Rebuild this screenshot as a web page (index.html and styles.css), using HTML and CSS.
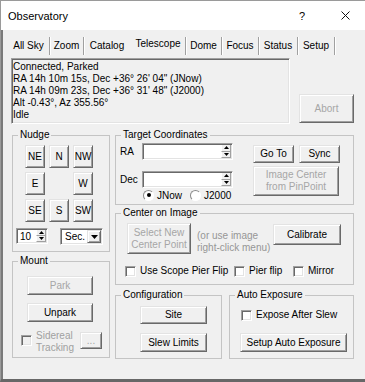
FILE: index.html
```html
<!DOCTYPE html>
<html lang="en">
<head>
  <meta charset="UTF-8" />
  <meta name="viewport" content="width=device-width, initial-scale=1.0" />
  <title>Observatory</title>
  <link rel="stylesheet" href="styles.css">
</head>
<body>
  <div class="window">
    <div class="titlebar">
      <span class="title">Observatory</span>
      <span class="help">?</span>
      <span class="close"><svg width="9" height="9" viewBox="0 0 9 9"><path d="M0.5 0.5L8.5 8.5M8.5 0.5L0.5 8.5" stroke="#111" stroke-width="1"/></svg></span>
    </div>

    <div class="client">
      <div class="tabs">
        <span class="tab w-allsky">All Sky</span>
        <span class="tab w-zoom">Zoom</span>
        <span class="tab w-catalog nosep">Catalog</span>
        <span class="tab w-telescope active">Telescope</span>
        <span class="tab w-dome">Dome</span>
        <span class="tab w-focus">Focus</span>
        <span class="tab w-status">Status</span>
        <span class="tab w-setup">Setup</span>
      </div>

      <div class="status-row">
        <div class="status sunken">
          <div>Connected, Parked</div>
          <div>RA 14h 10m 15s, Dec +36° 26' 04&quot; (JNow)</div>
          <div>RA 14h 09m 23s, Dec +36° 31' 48&quot; (J2000)</div>
          <div>Alt -0.43°, Az 355.56°</div>
          <div>Idle</div>
        </div>
        <button class="btn abort" disabled>Abort</button>
      </div>

      <div class="main">
        <div class="col col-left">
          <fieldset class="group nudge">
            <legend>Nudge</legend>
            <div class="pad-grid">
              <button class="btn">NE</button>
              <button class="btn">N</button>
              <button class="btn">NW</button>
              <button class="btn">E</button>
              <span></span>
              <button class="btn">W</button>
              <button class="btn">SE</button>
              <button class="btn">S</button>
              <button class="btn">SW</button>
            </div>
            <div class="spin-row">
              <div class="spin sunken">
                <span class="spin-val">10</span>
                <span class="updown">
                  <span><svg width="5" height="3" viewBox="0 0 5 3"><path d="M2.5 0L5 3H0z" fill="#000"/></svg></span>
                  <span><svg width="5" height="3" viewBox="0 0 5 3"><path d="M0 0H5L2.5 3z" fill="#000"/></svg></span>
                </span>
              </div>
              <div class="combo sunken">
                <span class="combo-val">Sec.</span>
                <span class="combo-btn"><svg width="7" height="4" viewBox="0 0 7 4"><path d="M0 0H7L3.5 4z" fill="#000"/></svg></span>
              </div>
            </div>
          </fieldset>

          <fieldset class="group mount">
            <legend>Mount</legend>
            <button class="btn park" disabled>Park</button>
            <button class="btn unpark">Unpark</button>
            <div class="sidereal">
              <span class="check off"></span>
              <span class="sidereal-label">Sidereal<br>Tracking</span>
              <button class="btn dots" disabled>...</button>
            </div>
          </fieldset>
        </div>

        <div class="col col-right">
          <fieldset class="group target">
            <legend>Target Coordinates</legend>
            <div class="target-body">
              <div class="coords">
                <div class="coord-row ra">
                  <span class="coord-label">RA</span>
                  <div class="field sunken">
                    <span class="updown">
                      <span><svg width="5" height="3" viewBox="0 0 5 3"><path d="M2.5 0L5 3H0z" fill="#000"/></svg></span>
                      <span><svg width="5" height="3" viewBox="0 0 5 3"><path d="M0 0H5L2.5 3z" fill="#000"/></svg></span>
                    </span>
                  </div>
                </div>
                <div class="coord-row dec">
                  <span class="coord-label">Dec</span>
                  <div class="field sunken">
                    <span class="updown">
                      <span><svg width="5" height="3" viewBox="0 0 5 3"><path d="M2.5 0L5 3H0z" fill="#000"/></svg></span>
                      <span><svg width="5" height="3" viewBox="0 0 5 3"><path d="M0 0H5L2.5 3z" fill="#000"/></svg></span>
                    </span>
                  </div>
                </div>
                <div class="radios">
                  <span class="radio on"><i></i></span><span class="radio-label">JNow</span>
                  <span class="radio"><i></i></span><span class="radio-label">J2000</span>
                </div>
              </div>
              <div class="target-btns">
                <div class="btn-pair">
                  <button class="btn goto">Go To</button>
                  <button class="btn sync">Sync</button>
                </div>
                <button class="btn pinpoint" disabled>Image Center<br>from PinPoint</button>
              </div>
            </div>
          </fieldset>

          <fieldset class="group center">
            <legend>Center on Image</legend>
            <div class="center-top">
              <button class="btn select-new" disabled>Select New<br>Center Point</button>
              <span class="note">(or use image<br>right-click menu)</span>
              <button class="btn calibrate">Calibrate</button>
            </div>
            <div class="options">
              <span class="opt opt-1"><span class="check"></span><span class="opt-label">Use Scope Pier Flip</span></span>
              <span class="opt opt-2"><span class="check"></span><span class="opt-label">Pier flip</span></span>
              <span class="opt"><span class="check"></span><span class="opt-label">Mirror</span></span>
            </div>
          </fieldset>

          <div class="bottom-row">
            <fieldset class="group config">
              <legend>Configuration</legend>
              <button class="btn site">Site</button>
              <button class="btn slew">Slew Limits</button>
            </fieldset>
            <fieldset class="group autoexp">
              <legend>Auto Exposure</legend>
              <span class="opt expose"><span class="check"></span><span class="opt-label">Expose After Slew</span></span>
              <button class="btn setup-auto">Setup Auto Exposure</button>
            </fieldset>
          </div>
        </div>
      </div>
    </div>
  </div>
</body>
</html>
```

FILE: styles.css
```css
* { box-sizing: border-box; }
html, body { margin: 0; padding: 0; }
body {
  width: 365px;
  height: 382px;
  overflow: hidden;
  font-family: "Liberation Sans", Arial, sans-serif;
  font-size: 10px;
  color: #000;
  background: #f0f0f0;
}

.window {
  height: 382px;
  display: flex;
  flex-direction: column;
  border-top: 1px solid #9a9a9a;
  border-left: 1px solid #9a9a9a;
  border-bottom: 3px solid #676767;
}

/* title bar */
.titlebar {
  height: 29px;
  flex: none;
  display: flex;
  align-items: center;
  padding-left: 7px;
  background: #fff;
  font-size: 11px;
}
.help { margin-left: auto; font-size: 11px; }
.close { display: flex; margin: 0 15px 0 36px; }

.client {
  flex: 1;
  padding: 0 11px;
  background: #f0f0f0;
  box-shadow: inset 2px 0 0 #7a7a7a;
}

/* tab strip (flat buttons) */
.tabs { display: flex; height: 18px; margin: 7px 0 0 -4px; }
.tab {
  height: 18px;
  line-height: 18px;
  text-align: center;
  border-right: 1px solid #a0a0a0;
  box-shadow: 1px 0 0 #fff;
}
.tab.nosep { border-right-color: transparent; box-shadow: none; }
.tab.active { line-height: 14px; }
.w-allsky { width: 42px; }
.w-zoom { width: 34px; }
.w-catalog { width: 47px; }
.w-telescope { width: 55px; }
.w-dome { width: 36px; }
.w-focus { width: 37px; }
.w-status { width: 39px; }
.w-setup { width: 37px; }

/* 3d borders */
.sunken {
  border: 1px solid;
  border-color: #a0a0a0 #fff #fff #a0a0a0;
  box-shadow: inset 1px 1px 0 #696969, inset -1px -1px 0 #e3e3e3;
}
.btn {
  font: inherit;
  color: #000;
  margin: 0;
  padding: 0;
  background: #f0f0f0;
  border: 1px solid;
  border-color: #e3e3e3 #696969 #696969 #e3e3e3;
  box-shadow: inset 1px 1px 0 #fff, inset -1px -1px 0 #a0a0a0;
  line-height: 12px;
}
.btn:disabled { color: #a6a6a6; }

/* status */
.status-row { display: flex; align-items: flex-end; margin-top: 3px; }
.status {
  width: 279px;
  height: 66px;
  margin-left: -1px;
  padding: 2px 0 0 1px;
  line-height: 12px;
}
.abort { width: 55px; height: 29px; margin: 0 0 1px 9px; }

/* group boxes */
.main { display: flex; gap: 5px; margin-top: 5px; }
.col { display: flex; flex-direction: column; }
.col-left { width: 98px; }
.col-right { width: 239px; }
.group {
  margin: 0;
  padding: 0;
  min-width: 0;
  border: 1px solid #c4c4c4;
}
.group legend {
  margin-left: 5px;
  padding: 0 2px;
  line-height: 12px;
}

/* nudge */
.nudge { height: 123px; }
.pad-grid {
  display: grid;
  grid-template-columns: repeat(3, 20px);
  grid-auto-rows: 23px;
  gap: 4px;
  margin: 4px 0 0 12px;
}
.spin-row { display: flex; margin: 6px 0 0 3px; }
.spin { display: flex; width: 32px; height: 16px; background: #fff; padding: 1px; }
.spin-val { flex: 1; line-height: 13px; padding-left: 2px; }
.updown { width: 10px; display: flex; flex-direction: column; }
.updown span {
  flex: 1;
  display: flex;
  align-items: center;
  justify-content: center;
  background: #f0f0f0;
  border-right: 1px solid #a0a0a0;
  border-bottom: 1px solid #a0a0a0;
  border-left: 1px solid #fff;
}
.combo { display: flex; width: 43px; height: 17px; margin-left: 12px; background: #fff; padding: 1px; }
.combo-val { flex: 1; line-height: 14px; padding-left: 3px; }
.combo-btn {
  width: 14px;
  display: flex;
  align-items: center;
  justify-content: center;
  background: #f0f0f0;
  border: 1px solid;
  border-color: #e3e3e3 #696969 #696969 #e3e3e3;
  box-shadow: inset 1px 1px 0 #fff, inset -1px -1px 0 #a0a0a0;
}

/* mount */
.mount { height: 103px; margin-top: 3px; }
.park, .unpark { display: block; width: 66px; height: 19px; margin-left: 14px; }
.park { margin-top: 9px; }
.unpark { margin-top: 8px; }
.sidereal { display: flex; margin: 8px 0 0 8px; }
.sidereal .check { margin-top: 5px; }
.sidereal-label { width: 40px; margin-left: 4px; line-height: 12px; color: #a0a0a0; }
.dots { width: 22px; height: 17px; margin: 2px 0 0 4px; }

/* checkboxes + radios */
.check {
  flex: none;
  width: 11px;
  height: 11px;
  background: #fff;
  border: 1px solid;
  border-color: #a0a0a0 #fff #fff #a0a0a0;
  box-shadow: inset 1px 1px 0 #696969, inset -1px -1px 0 #e3e3e3;
}
.check.off { background: #f0f0f0; }
.opt { display: flex; align-items: center; line-height: 12px; }
.opt-label { margin-left: 4px; white-space: nowrap; }
.radio {
  flex: none;
  width: 11px;
  height: 11px;
  border-radius: 50%;
  background: #fff;
  border: 1px solid;
  border-color: #8a8a8a #fff #fff #8a8a8a;
  display: flex;
  align-items: center;
  justify-content: center;
}
.radio i { width: 4px; height: 4px; border-radius: 50%; }
.radio.on i { background: #000; }
.radio-label { margin: 0 8px 0 3px; }

/* target coordinates */
.target { height: 76px; }
.target-body { display: flex; }
.coords { width: 117px; }
.coord-row { display: flex; align-items: center; }
.coord-row.ra { margin-top: 2px; }
.coord-row.dec { margin-top: 11px; }
.coord-label { width: 26px; padding-left: 4px; }
.field { width: 91px; height: 17px; background: #fff; display: flex; justify-content: flex-end; padding: 1px; }
.radios { display: flex; align-items: center; margin: 1px 0 0 27px; height: 12px; }
.target-btns { margin-left: 20px; }
.btn-pair { display: flex; gap: 5px; margin-top: 4px; }
.goto, .sync { width: 41px; height: 18px; }
.pinpoint { display: block; width: 86px; height: 30px; margin-top: 3px; }

/* center on image */
.center { height: 78px; margin-top: 2px; }
.center-top { display: flex; align-items: flex-start; }
.select-new { width: 64px; height: 31px; margin: 4px 0 0 11px; }
.note { width: 76px; margin: 11px 0 0 6px; line-height: 12px; color: #969696; white-space: nowrap; }
.calibrate { width: 68px; height: 21px; margin: 5px 0 0 0; }
.options { display: flex; margin: 11px 0 0 9px; }
.opt-1 { width: 109px; }
.opt-2 { width: 59px; }

/* configuration + auto exposure */
.bottom-row { display: flex; gap: 7px; margin-top: 4px; }
.config { width: 107px; height: 70px; }
.autoexp { width: 125px; height: 70px; }
.site, .slew { display: block; width: 67px; margin-left: 24px; }
.site { height: 18px; margin-top: 5px; }
.slew { height: 19px; margin-top: 9px; }
.expose { margin: 8px 0 0 11px; }
.setup-auto { display: block; width: 107px; height: 19px; margin: 12px 0 0 10px; }
```
